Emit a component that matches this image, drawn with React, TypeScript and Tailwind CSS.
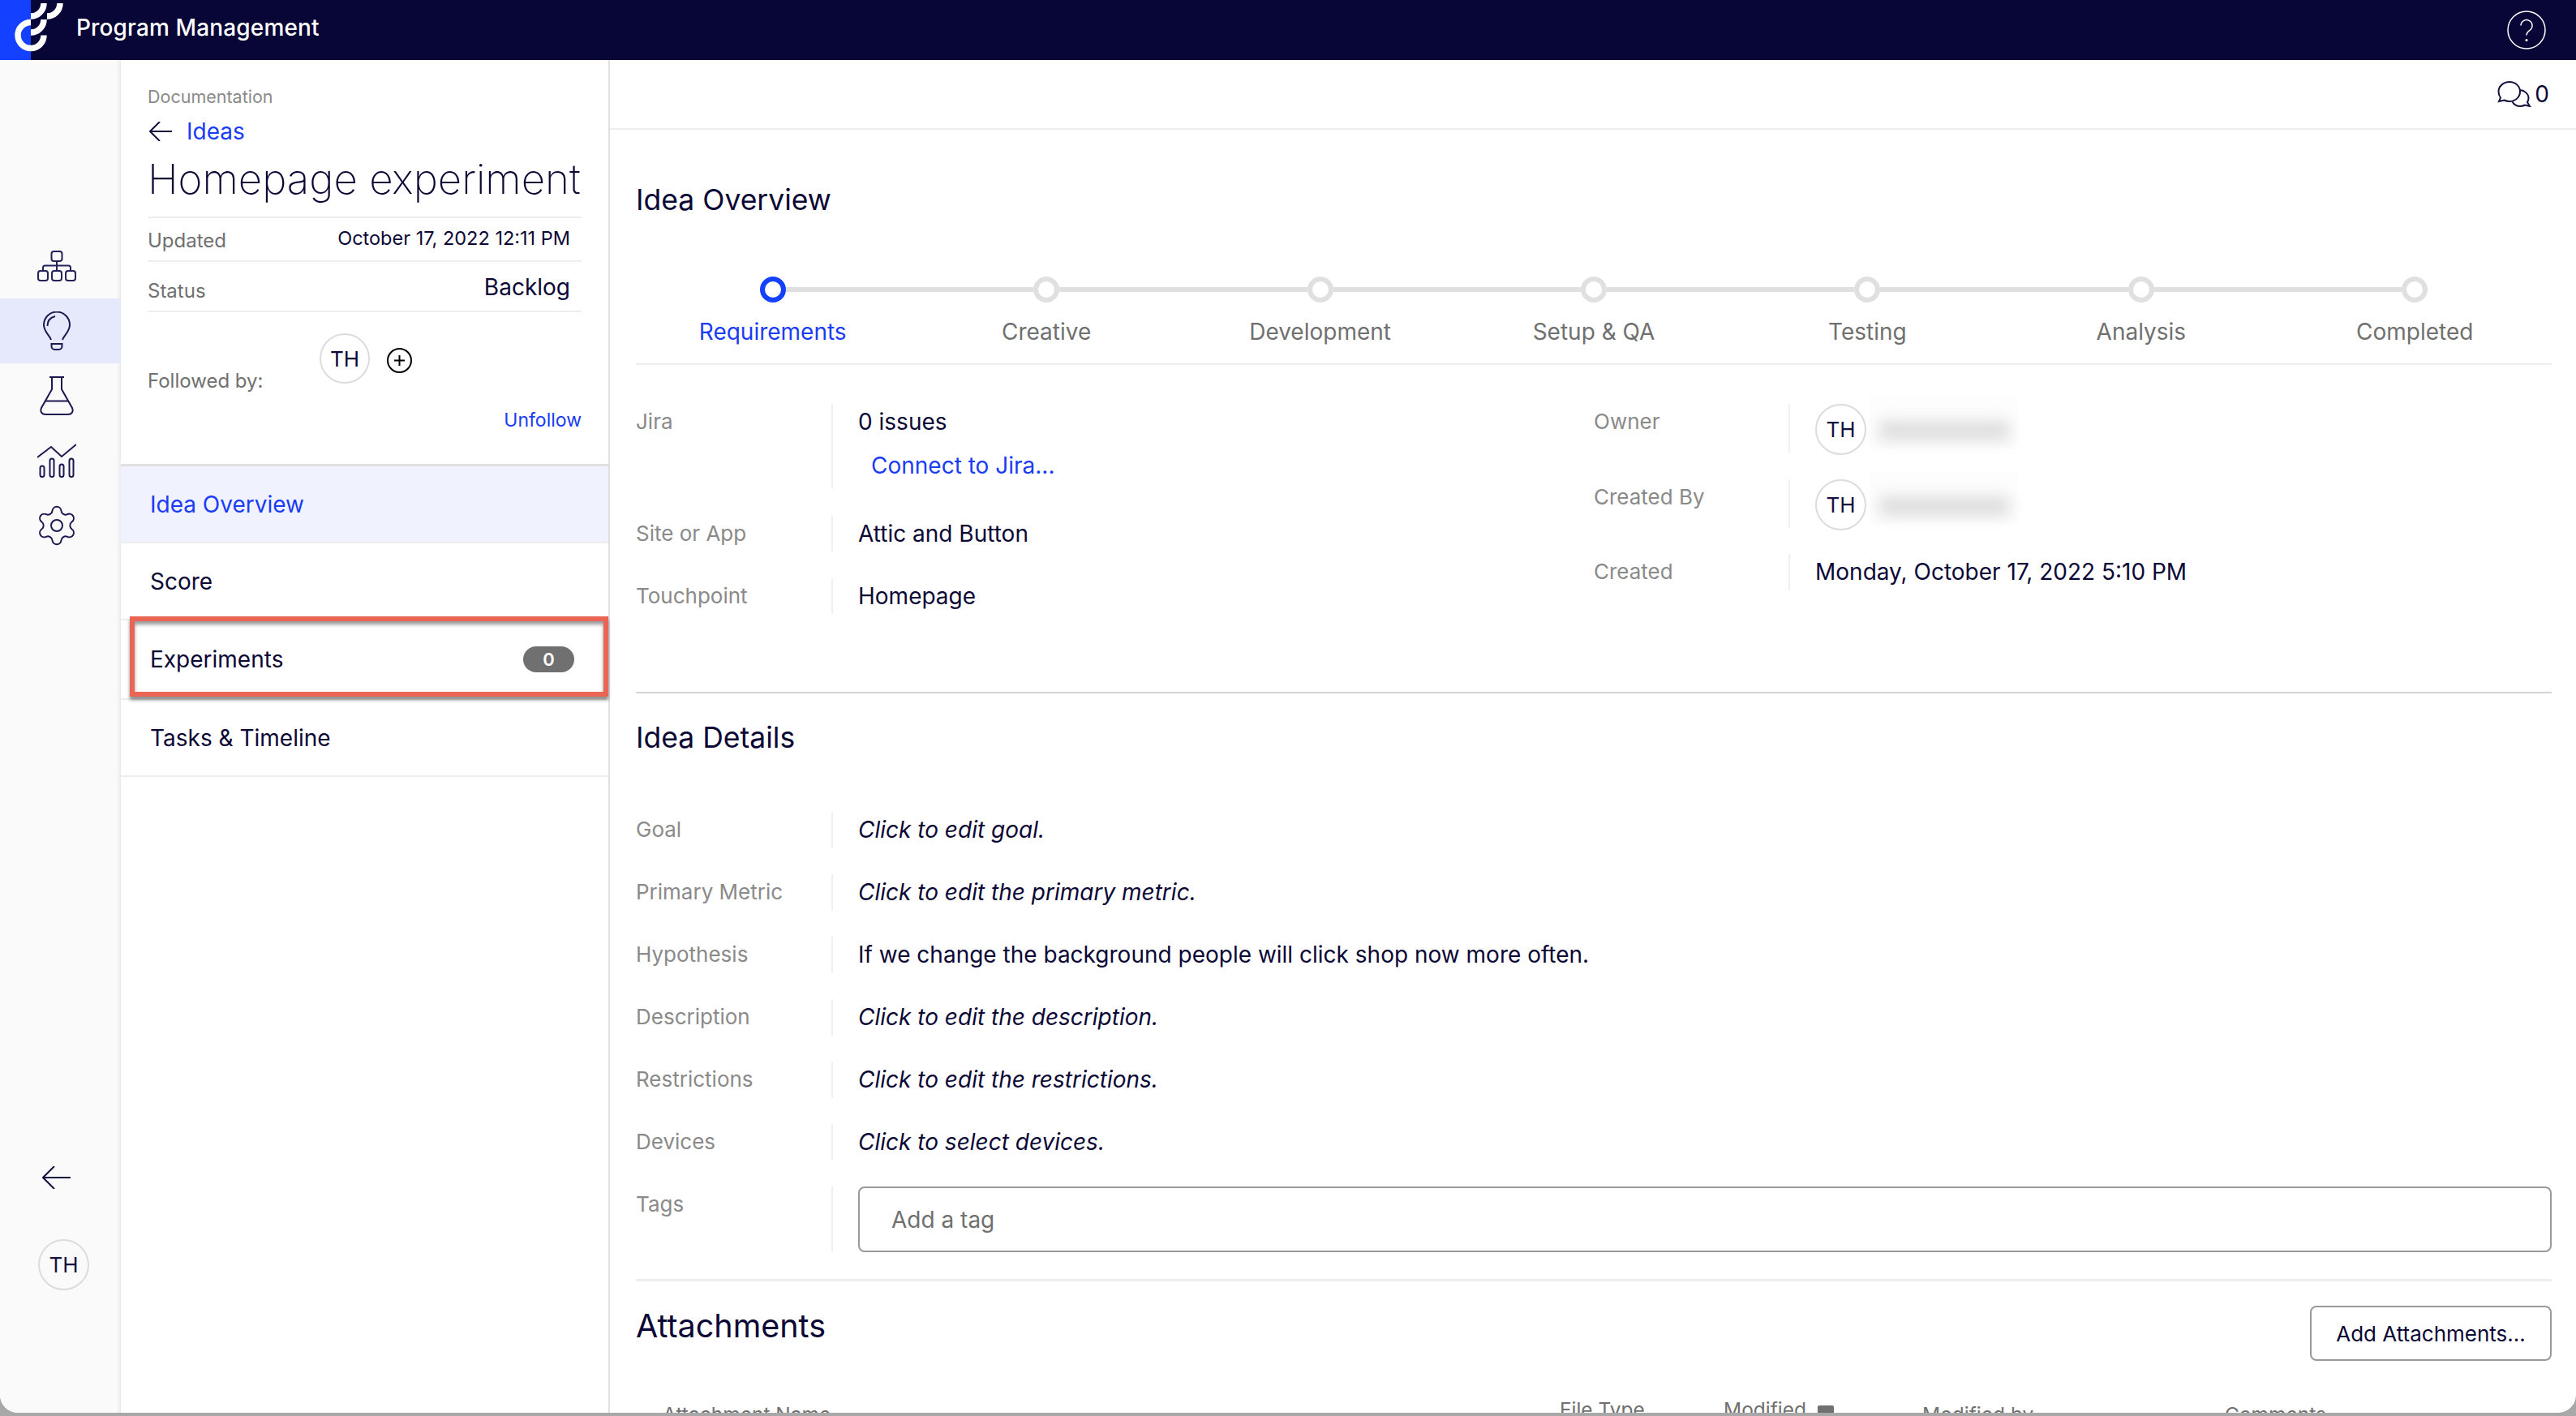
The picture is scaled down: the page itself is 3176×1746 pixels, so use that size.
import React from 'react';
import { Settings } from 'lucide-react';

const steps = ['Requirements', 'Creative', 'Development', 'Setup & QA', 'Testing', 'Analysis', 'Completed'];

const details = [
  { label: 'Goal', value: 'Click to edit goal.', italic: true },
  { label: 'Primary Metric', value: 'Click to edit the primary metric.', italic: true },
  { label: 'Hypothesis', value: 'If we change the background people will click shop now more often.', italic: false },
  { label: 'Description', value: 'Click to edit the description.', italic: true },
  { label: 'Restrictions', value: 'Click to edit the restrictions.', italic: true },
  { label: 'Devices', value: 'Click to select devices.', italic: true },
];

const Logo = () => (
  <svg width="80" height="74" viewBox="0 0 80 74" fill="none" stroke="#fff" strokeWidth="7.5" className="shrink-0">
    <path d="M38 27.500A16 16 0 1 0 54 43.500" />
    <path d="M38 40A16 16 0 0 0 54 24" />
    <path d="M38 20A16 16 0 0 0 54 4" />
    <path d="M58 20A16 16 0 0 0 74 4" />
  </svg>
);

const OrgIcon = () => (
  <svg width="48" height="38" viewBox="0 0 48 38" fill="none" stroke="#24225a" strokeWidth="2">
    <rect x="17.500" y="1" width="13" height="12" rx="3" />
    <rect x="1" y="25" width="12" height="12" rx="3" />
    <rect x="18" y="25" width="12" height="12" rx="3" />
    <rect x="35" y="25" width="12" height="12" rx="3" />
    <path d="M24 13V25M7 25V21a2.500 2.500 0 0 1 2.500-2.500H38.500A2.500 2.500 0 0 1 41 21V25" />
  </svg>
);

const BulbIcon = () => (
  <svg width="34" height="48" viewBox="0 0 34 48" fill="none" stroke="#1b1950" strokeWidth="2">
    <path d="M10 35C8 29 1 25 1 16.500a16 16 0 0 1 32 0C33 25 26 29 24 35" />
    <path d="M5.500 18C5.500 12 9 7.500 15 6" />
    <path d="M10.500 40H23.500V43a4 4 0 0 1-4 4H14.500a4 4 0 0 1-4-4Z" />
  </svg>
);

const FlaskIcon = () => (
  <svg width="42" height="48" viewBox="0 0 42 48" fill="none" stroke="#1b1950" strokeWidth="2">
    <path d="M12 1H30M15 1V16L2 39C0 44 3 47 7 47H35C39 47 42 44 40 39L27 16V1" />
    <path d="M7 30.500H35" />
  </svg>
);

const ChartIcon = () => (
  <svg width="48" height="42" viewBox="0 0 48 42" fill="none" stroke="#1b1950" strokeWidth="2">
    <path d="M0 17L17 4L30 16L48 1" />
    <rect x="3.500" y="27.500" width="5" height="13.500" rx="2.500" />
    <rect x="15.500" y="18.500" width="5" height="22.500" rx="2.500" />
    <rect x="27.500" y="25.500" width="5" height="15.500" rx="2.500" />
    <rect x="39.500" y="18.500" width="5" height="22.500" rx="2.500" />
  </svg>
);

const BackArrow = ({ width, height }: { width: number; height: number }) => (
  <svg width={width} height={height} viewBox={`0 0 ${width} ${height}`} fill="none" stroke="#14123f" strokeWidth="2" className="shrink-0">
    <path d={`M${width} ${height / 2}H1M${height / 2 + 1} 0L1 ${height / 2}L${height / 2 + 1} ${height}`} />
  </svg>
);

const HelpIcon = () => (
  <svg width="48" height="48" viewBox="0 0 48 48" fill="none" stroke="#fff" strokeWidth="1.500">
    <circle cx="24" cy="24" r="23" />
    <path d="M17 18.500a7 7 0 1 1 11 5.800c-2.500 1.700-4 3-4 6.200" />
    <circle cx="24" cy="36.500" r="0.800" fill="#fff" />
  </svg>
);

const CommentsIcon = () => (
  <svg width="42" height="32" viewBox="0 0 42 32" fill="none" stroke="#14123f" strokeWidth="2">
    <path d="M15 1C8 1 1.500 6 1.500 13C1.500 16 2.500 18.500 4 20.500L2 25L8.500 23.500C10.500 24.500 12.500 25 15 25C22 25 28 20 28 13C28 6 22 1 15 1Z" />
    <path d="M28 11C33.500 11.500 38.500 15.500 38.500 21C38.500 23 38 24.500 37 26L40 31L34 29.500C32 30.500 30.500 31 28.500 31C24 31 20.500 29 18.500 25.500" />
  </svg>
);

const PlusCircle = () => (
  <svg width="31" height="31" viewBox="0 0 31 31" fill="none" stroke="#000" strokeWidth="2" className="mt-[18px] ml-[21px]">
    <circle cx="15.500" cy="15.500" r="14.500" />
    <path d="M15.500 9V22M9 15.500H22" />
  </svg>
);

const Avatar = () => (
  <div className="w-[63px] h-[63px] shrink-0 rounded-full border-2 border-[#dcdcdc] flex items-center justify-center text-[26px] text-[#14123f]">
    TH
  </div>
);

const Blurred = () => (
  <div className="w-[183px] h-[65px] -mt-[10px] ml-[4px] bg-[#fdfdfd] flex items-end justify-center pb-[10px]">
    <div className="w-[160px] h-[24px] rounded bg-[#dddddd] blur-[9px]"></div>
  </div>
);

const Row = ({
  label,
  height,
  labelWidth = 'w-[241px]',
  children,
}: {
  label: string;
  height: string;
  labelWidth?: string;
  children: React.ReactNode;
}) => (
  <div className={`flex ${height}`}>
    <div className={`${labelWidth} shrink-0 text-[26px] leading-[44px] text-[#8a8a8a]`}>{label}</div>
    <div className="flex-1 border-l-2 border-[#f0f0f0] pl-[31px] text-[28px] leading-[44px] text-[#0b0836] min-w-0">
      {children}
    </div>
  </div>
);

const App: React.FC = () => {
  return (
    <div className="w-full h-[1746px] bg-[#a8a8a8] overflow-hidden font-['Inter',sans-serif] text-[#0b0836]">
      <div className="h-[1742px] bg-white rounded-b-[22px] overflow-hidden flex flex-col">
        {/* Top bar */}
        <header className="h-[74px] shrink-0 bg-[#080537] flex items-center relative">
          <div className="absolute left-0 top-0 w-[38px] h-[74px] bg-[#1440ff]"></div>
          <div className="relative flex items-center w-full pr-[37px]">
            <Logo />
            <span className="ml-[14px] -mt-[6px] text-[28px] font-medium tracking-[0.005em] text-white">Program Management</span>
            <div className="ml-auto"><HelpIcon /></div>
          </div>
        </header>

        <div className="flex flex-1 min-h-0">
          {/* Icon rail */}
          <aside className="w-[149px] shrink-0 bg-[#fafafa] shadow-[inset_-5px_0_5px_-3px_rgba(0,0,0,0.08)] flex flex-col">
            <div className="mt-[235px] h-[38px] flex justify-center pr-[9px]"><OrgIcon /></div>
            <div className="mt-[21px] h-[80px] bg-[#e6e9fc] flex items-center justify-center pr-[9px]"><BulbIcon /></div>
            <div className="mt-[16px] h-[48px] flex justify-center pr-[9px]"><FlaskIcon /></div>
            <div className="mt-[35px] h-[42px] flex justify-center pr-[9px]"><ChartIcon /></div>
            <div className="mt-[35px] h-[48px] flex justify-center pr-[9px]">
              <Settings size={56} strokeWidth={0.85} color="#1b1950" className="-mt-[4px]" />
            </div>
            <div className="mt-auto pl-[52px]"><BackArrow width={35} height={28} /></div>
            <div className="mt-[62px] mb-[151px] pl-[47px]">
              <Avatar />
            </div>
          </aside>

          {/* Idea panel */}
          <section className="w-[603px] shrink-0 border-r-2 border-[#e0e0e0] flex flex-col">
            <div className="pl-[33px] w-[568px] shrink-0">
              <div className="mt-[30px] h-[30px] leading-[30px] text-[21.500px] text-[#8a8a8a]">Documentation</div>
              <div className="mt-[10px] h-[36px] flex items-center pl-[2px]">
                <BackArrow width={28} height={24} />
                <span className="ml-[18px] text-[28px] text-[#1a3cf5]">Ideas</span>
              </div>
              <h1 className="mt-[6px] h-[70px] leading-[70px] text-[51px] font-extralight whitespace-nowrap">Homepage experiment</h1>
              <div className="mt-[11px] border-t-2 border-[#eeeeee] h-[56px] border-b-2 flex items-center justify-between pr-[14px]">
                <span className="text-[24px] text-[#707070] mt-[4px]">Updated</span>
                <span className="text-[23.500px] -mt-[2px]">October 17, 2022 12:11 PM</span>
              </div>
              <div className="h-[62px] border-b-2 border-[#eeeeee] flex items-center justify-between pr-[14px]">
                <span className="text-[24px] text-[#707070] mt-[12px]">Status</span>
                <span className="text-[28px] mt-[2px]">Backlog</span>
              </div>
              <div className="h-[187px] pt-[26px]">
                <div className="h-[74px] flex items-start">
                  <span className="w-[212px] mt-[44px] text-[24px] leading-[30px] text-[#707070]">Followed by:</span>
                  <div className="w-[62px] h-[62px] rounded-full border-2 border-[#dcdcdc] flex items-center justify-center text-[26px]">TH</div>
                  <PlusCircle />
                </div>
                <div className="mt-[18px] text-right text-[23px] leading-[30px] text-[#1a3cf5]">Unfollow</div>
              </div>
            </div>

            <nav className="border-t-[3px] border-[#e0e0e0] text-[28px]">
              <div className="h-[95px] bg-[#f0f2fd] border-b-2 border-[#eeeeee] flex items-center pl-[36px] text-[#1a3cf5]">Idea Overview</div>
              <div className="h-[95px] border-b-2 border-[#eeeeee] flex items-center pl-[36px]">Score</div>
              <div className="relative h-[98px] border-b-2 border-[#eeeeee] flex items-center justify-between pl-[36px] pr-[42px]">
                <span>Experiments</span>
                <span className="w-[63px] h-[32px] rounded-full bg-[#707070] text-white text-[22px] font-semibold flex items-center justify-center">0</span>
                {/* Annotation frame */}
                <div className="absolute left-[11px] right-0 -top-[5px] bottom-[2px] border-[6px] border-[#ea6553] shadow-[0_4px_4px_rgba(0,0,0,0.45),inset_0_4px_4px_rgba(0,0,0,0.4)]"></div>
              </div>
              <div className="h-[95px] border-b-2 border-[#eeeeee] flex items-center pl-[36px]">Tasks &amp; Timeline</div>
            </nav>
          </section>

          {/* Main content */}
          <main className="flex-1 min-w-0 overflow-hidden">
            <div className="h-[86px] border-b-2 border-[#eeeeee] flex items-center justify-end pr-[33px]">
              <CommentsIcon />
              <span className="ml-[4px] text-[28px]">0</span>
            </div>

            <div className="pl-[32px] pr-[30px]">
              <h2 className="mt-[62px] h-[50px] leading-[50px] text-[35.500px]">Idea Overview</h2>

              {/* Stepper */}
              <div className="mt-[69px] grid grid-cols-7 border-b-2 border-[#eeeeee] pb-[22px]">
                {steps.map((step, index) => (
                  <div key={step} className="flex flex-col items-center">
                    <div className="w-full h-[32px] flex items-center">
                      <div className={`flex-1 h-[6px] ${index === 0 ? '' : 'bg-[#e0e0e0]'}`}></div>
                      <div className={`w-[32px] h-[32px] rounded-full border-[6px] bg-white ${index === 0 ? 'border-[#1440ff]' : 'border-[#e0e0e0]'}`}></div>
                      <div className={`flex-1 h-[6px] ${index === steps.length - 1 ? '' : 'bg-[#e0e0e0]'}`}></div>
                    </div>
                    <div className={`mt-[19px] text-[28px] leading-[34px] ${index === 0 ? 'text-[#1a3cf5]' : 'text-[#707070]'}`}>{step}</div>
                  </div>
                ))}
              </div>

              {/* Fields */}
              <div className="mt-[48px] flex border-b-2 border-[#d4d4d4] pb-[96px]">
                <div className="w-[1181px] shrink-0 flex flex-col gap-[33px]">
                  <Row label="Jira" height="h-[105px]">
                    <div>0 issues</div>
                    <div className="mt-[10px] ml-[16px] text-[#1a3cf5]">Connect to Jira...</div>
                  </Row>
                  <Row label="Site or App" height="h-[44px]">Attic and Button</Row>
                  <Row label="Touchpoint" height="h-[44px]">Homepage</Row>
                </div>
                <div className="flex-1 flex flex-col gap-[32px]">
                  <Row label="Owner" height="h-[61px]" labelWidth="w-[240px]">
                    <div className="flex items-start"><Avatar /><Blurred /></div>
                  </Row>
                  <Row label="Created By" height="h-[60px]" labelWidth="w-[240px]">
                    <div className="flex items-start"><Avatar /><Blurred /></div>
                  </Row>
                  <Row label="Created" height="h-[45px]" labelWidth="w-[240px]">Monday, October 17, 2022 5:10 PM</Row>
                </div>
              </div>

              <h2 className="mt-[30px] h-[50px] leading-[50px] text-[35.500px]">Idea Details</h2>

              <div className="mt-[66px] flex flex-col gap-[32px]">
                {details.map((item) => (
                  <Row key={item.label} label={item.label} height="h-[45px]">
                    <span className={item.italic ? 'italic' : ''}>{item.value}</span>
                  </Row>
                ))}
                <div className="flex h-[81px]">
                  <div className="w-[241px] shrink-0 text-[26px] leading-[44px] text-[#8a8a8a]">Tags</div>
                  <div className="flex-1 border-l-2 border-[#f0f0f0] pl-[31px]">
                    <div className="h-full border-2 border-[#999999] rounded-[8px] flex items-center pl-[39px] text-[28px] text-[#707070]">Add a tag</div>
                  </div>
                </div>
              </div>

              <div className="mt-[33px] border-t-[3px] border-[#eeeeee] pt-[30px] flex items-start justify-between">
                <h2 className="h-[50px] leading-[50px] text-[39.500px]">Attachments</h2>
                <button className="w-[298px] h-[68px] border-2 border-[#999999] rounded-[8px] text-[26px] text-[#0b0836]">Add Attachments...</button>
              </div>

              {/* Table header, cut off by the window */}
              <div className="flex items-start pl-[33px] text-[24.500px] leading-[34px] text-[#707070]">
                <div className="w-[1106px] shrink-0 mt-[49px]">Attachment Name</div>
                <div className="w-[202px] shrink-0 mt-[43px]">File Type</div>
                <div className="w-[245px] shrink-0 mt-[43px] flex items-center">
                  Modified
                  <span className="ml-[14px] w-[20px] h-[10px] bg-[#707070] rounded-t-[2px]"></span>
                </div>
                <div className="w-[373px] shrink-0 mt-[49px]">Modified by</div>
                <div className="mt-[49px]">Comments</div>
              </div>
            </div>
          </main>
        </div>
      </div>
    </div>
  );
};

export default App;
